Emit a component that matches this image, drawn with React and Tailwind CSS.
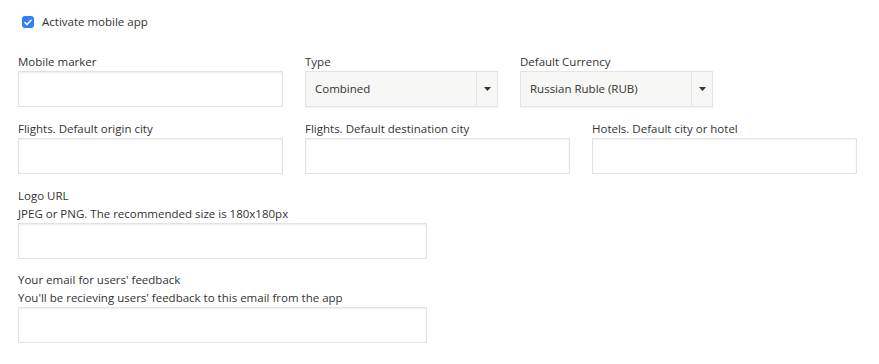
import React from "react";

function Label({ children }) {
  return <div className="h-[18px] leading-[18px] text-[#333]">{children}</div>;
}

function TextInput({ w }) {
  return (
    <div
      className={`${w} h-[36px] border border-[#e2e2e2] bg-white shadow-[inset_0_1px_2px_rgba(0,0,0,0.07)]`}
    />
  );
}

function Select({ value }) {
  return (
    <div className="flex h-[36px] w-[193px] border border-[#e3e3e3] bg-[#f7f7f5] shadow-[0_1px_1px_rgba(0,0,0,0.04)]">
      <div className="flex flex-1 items-center pl-[9px] text-[#333]">{value}</div>
      <div className="flex w-[21px] items-center justify-center border-l border-[#e6e6e4]">
        <svg width="7" height="4" viewBox="0 0 7 4">
          <path d="M0 0h7L3.5 4z" fill="#333" />
        </svg>
      </div>
    </div>
  );
}

export default function App() {
  return (
    <div
      className="w-[879px] h-[364px] bg-white pl-[18px] pt-[13px] text-[11.5px]"
      style={{ fontFamily: '"Open Sans", "Liberation Sans", sans-serif' }}
    >
      <div className="flex h-[18px] items-center gap-[8px] pl-[4px]">
        <div className="flex h-[12px] w-[12px] items-center justify-center rounded-[3px] bg-[#2f80f5]">
          <svg width="8" height="7" viewBox="0 0 8 7">
            <path d="M1 3.6 3 5.6 7 1.2" fill="none" stroke="white" strokeWidth="1.5" strokeLinecap="round" strokeLinejoin="round" />
          </svg>
        </div>
        <span className="text-[#333]">Activate mobile app</span>
      </div>

      <div className="mt-[22px] flex gap-[22px]">
        <div>
          <Label>Mobile marker</Label>
          <TextInput w="w-[265px]" />
        </div>
        <div>
          <Label>Type</Label>
          <Select value="Combined" />
        </div>
        <div>
          <Label>Default Currency</Label>
          <Select value="Russian Ruble (RUB)" />
        </div>
      </div>

      <div className="mt-[13px] flex gap-[22px]">
        <div>
          <Label>Flights. Default origin city</Label>
          <TextInput w="w-[265px]" />
        </div>
        <div>
          <Label>Flights. Default destination city</Label>
          <TextInput w="w-[265px]" />
        </div>
        <div>
          <Label>Hotels. Default city or hotel</Label>
          <TextInput w="w-[265px]" />
        </div>
      </div>

      <div className="mt-[13px]">
        <Label>Logo URL</Label>
        <Label>JPEG or PNG. The recommended size is 180x180px</Label>
        <TextInput w="w-[409px]" />
      </div>

      <div className="mt-[12px]">
        <Label>Your email for users' feedback</Label>
        <Label>You'll be recieving users' feedback to this email from the app</Label>
        <TextInput w="w-[409px]" />
      </div>
    </div>
  );
}
